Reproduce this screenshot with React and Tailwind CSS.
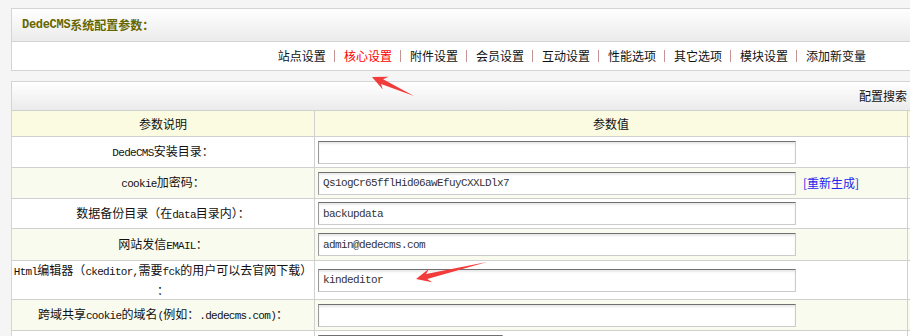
import React from 'react';

const LATIN = "font-['Liberation_Mono',monospace] text-[11px] tracking-[-0.7px]";

// wraps ascii runs so they get the narrow mono face, CJK stays in Noto
function Mix({ text, latin = LATIN }) {
  const parts = text.split(/([\x20-\x7E]+)/).filter(Boolean);
  return parts.map((p, i) =>
    /^[\x20-\x7E]+$/.test(p) ? <span key={i} className={latin}>{p}</span> : <span key={i}>{p}</span>
  );
}

function arrowPts(tx, ty, sx, sy, hl = 15, hw = 7, nl = 11, sw = 2.6) {
  const dx = sx - tx, dy = sy - ty, L = Math.hypot(dx, dy);
  const ux = dx / L, uy = dy / L, nx = -uy, ny = ux;
  const p = (a, b) => `${(tx + ux * a + nx * b).toFixed(1)},${(ty + uy * a + ny * b).toFixed(1)}`;
  return [p(0, 0), p(hl, hw), p(nl, sw), `${sx},${sy}`, p(nl, -sw), p(hl, -hw)].join(' ');
}

const NAV = ['站点设置', '核心设置', '附件设置', '会员设置', '互动设置', '性能选项', '其它选项', '模块设置', '添加新变量'];

const ROWS = [
  { label: 'DedeCMS安装目录：', value: '', h: 'h-[31px]', bg: 'bg-white' },
  { label: 'cookie加密码：', value: 'Qs1ogCr65fflHid06awEfuyCXXLDlx7', h: 'h-[31px]', bg: 'bg-[#f9fbef]', link: true },
  { label: '数据备份目录（在data目录内）：', value: 'backupdata', h: 'h-[30px]', bg: 'bg-white' },
  { label: '网站发信EMAIL：', value: 'admin@dedecms.com', h: 'h-[32px]', bg: 'bg-[#f9fbef]' },
  { label: 'html', value: 'kindeditor', h: 'h-[39px]', bg: 'bg-white' },
  { label: '跨域共享cookie的域名(例如：.dedecms.com)：', value: '', h: 'h-[31px]', bg: 'bg-[#f9fbef]' },
  { label: '', value: '', h: 'h-[31px]', bg: 'bg-white', small: true },
];

function Field({ value, small }) {
  return (
    <input
      readOnly
      defaultValue={value}
      className={`${small ? 'w-[185px]' : 'w-[478px]'} h-[23px] shrink-0 border border-[#cbcbcb] border-t-[#6f6f6f] border-l-[#9a9a9a] bg-white px-[4px] text-[#333] shadow-[inset_0_2px_2px_rgba(0,0,0,0.09)] outline-none font-['Liberation_Mono',monospace] text-[11px] tracking-[-0.6px]`}
    />
  );
}

export default function App() {
  return (
    <div className="relative w-[910px] h-[336px] overflow-hidden bg-[#f5f5f5] pt-[8px] pl-[11px] font-['Noto_Sans_CJK_SC',sans-serif] text-[12px] leading-[16px] text-[#111]">
      {/* top box */}
      <div className="w-[1000px] border border-[#d4d4d4] bg-white">
        <div className="flex h-[33px] items-center border-b border-[#d4d4d4] bg-gradient-to-b from-white to-[#ebebeb] pl-[10px] font-bold text-[#666600]">
          <Mix text="DedeCMS系统配置参数：" latin="font-['Liberation_Mono',monospace] text-[12px] tracking-[-0.3px]" />
        </div>
        <div className="flex h-[28px] items-center justify-end pr-[144px]">
          {NAV.map((n, i) => (
            <React.Fragment key={n}>
              {i > 0 && <span className="ml-[8px] mr-[9px] inline-block h-[12px] w-px bg-[#c49494]" />}
              <span className={i === 1 ? 'text-[#ff0000]' : 'text-[#111]'}>{n}</span>
            </React.Fragment>
          ))}
        </div>
      </div>

      {/* config table */}
      <div className="mt-[10px] w-[1000px] border border-[#d4d4d4] bg-white">
        <div className="flex h-[29px] items-center justify-end border-b border-[#d0d0d0] bg-gradient-to-b from-white to-[#ebebeb] pr-[9px]">
          <span>配置搜索</span>
          <input readOnly className="ml-[4px] h-[20px] w-[90px] border border-[#bbb] bg-white" />
        </div>
        <div className="flex h-[26px] border-b border-[#d0d0d0] bg-[#fbfbe1]">
          <div className="flex w-[303px] items-center justify-center border-r border-[#d0d0d0]">参数说明</div>
          <div className="flex w-[593px] items-center justify-center border-r border-[#d0d0d0]">参数值</div>
          <div className="flex-1" />
        </div>
        {ROWS.map((r, i) => (
          <div key={i} className={`flex ${r.h} border-b border-[#d0d0d0] ${r.bg}`}>
            <div className="flex w-[303px] items-center justify-center border-r border-[#d0d0d0] px-[1px] text-center leading-[18px]">
              {r.label === 'html' ? (
                <div>
                  <Mix text="Html编辑器（ckeditor,需要fck的用户可以去官网下载）" />
                  <br />：
                </div>
              ) : (
                <div><Mix text={r.label} /></div>
              )}
            </div>
            <div className="flex w-[593px] items-center border-r border-[#d0d0d0] pl-[3px]">
              <Field value={r.value} small={r.small} />
              {r.link && <span className="ml-[7px] text-[#2323ee]">[重新生成]</span>}
            </div>
            <div className="flex-1" />
          </div>
        ))}
      </div>

      {/* annotation arrows */}
      <svg className="pointer-events-none absolute left-0 top-0" width="910" height="336">
        <polygon points={arrowPts(372, 77, 414, 96)} fill="#f23b3b" />
        <polygon points={arrowPts(416, 279, 487, 262)} fill="#f23b3b" />
      </svg>
    </div>
  );
}
